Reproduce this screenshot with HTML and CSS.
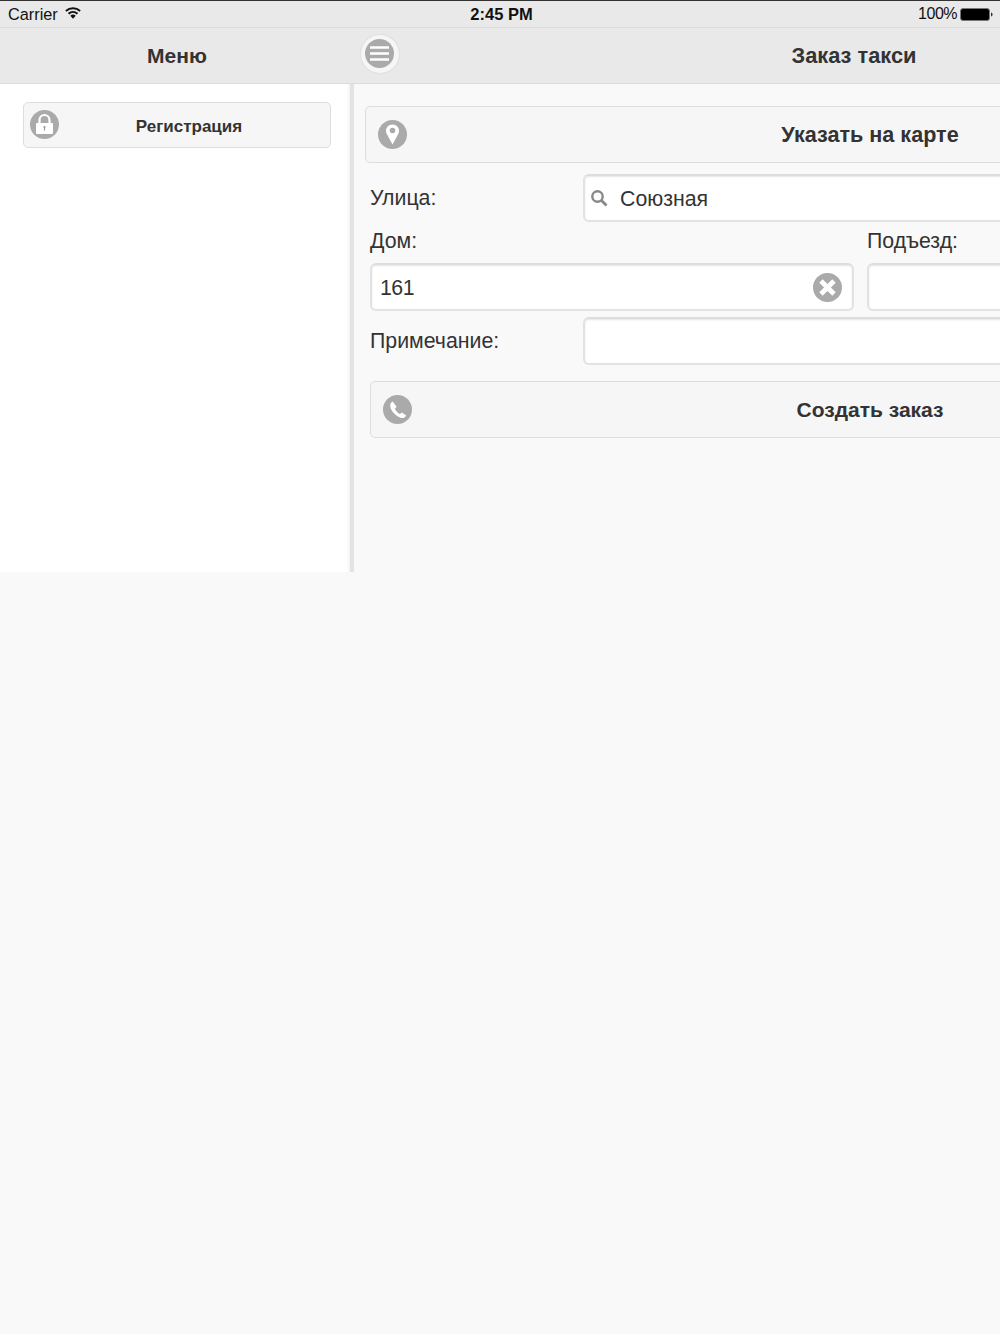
FILE: index.html
```html
<!DOCTYPE html>
<html lang="ru">
<head>
<meta charset="utf-8">
<title>Заказ такси</title>
<link rel="stylesheet" href="styles.css">
</head>
<body>
<div class="app">
  <div class="status">
    <div class="status-left">
      <span>Carrier</span>
      <svg class="wifi" width="16" height="12" viewBox="0 0 16 12"><path d="M8 11.800 5.300 8.800a4 4 0 0 1 5.400 0Z" fill="#111"/><path d="M3.500 6.700a6.800 6.800 0 0 1 9 0M.9 3.900a10.600 10.600 0 0 1 14.200 0" fill="none" stroke="#111" stroke-width="2"/></svg>
    </div>
    <div class="status-time">2:45 PM</div>
    <div class="status-right">
      <span>100%</span>
      <svg width="33" height="13" viewBox="0 0 33 13"><rect x=".5" y=".5" width="29" height="12" rx="2.500" fill="#000" stroke="#777"/><path d="M31 4.500c1 .2 1.600 1 1.600 2s-.6 1.800-1.600 2Z" fill="#333"/></svg>
    </div>
  </div>
  <div class="topbar">
    <div class="topbar-left">Меню</div>
    <div class="topbar-right">Заказ такси</div>
    <div class="menu-btn">
      <svg class="disc" viewBox="0 0 29 29"><circle cx="14.500" cy="14.500" r="14.500" fill="#aaa"/><path d="M5 8.500h19M5 14.500h19M5 20.500h19" stroke="#fff" stroke-width="2.400"/></svg>
    </div>
  </div>
  <div class="main">
    <aside class="sidebar">
      <button class="btn btn-side" type="button">
        <svg class="disc" viewBox="0 0 29 29"><circle cx="14.500" cy="14.500" r="14.500" fill="#aaa"/><path d="M9.500 13v-3a5 5 0 0 1 10 0v3" fill="none" stroke="#fff" stroke-width="2.200"/><rect x="6" y="13" width="17" height="11" rx="1" fill="#fff"/><path d="M14.500 16.500v4" stroke="#999" stroke-width="1.200"/><circle cx="14.500" cy="17" r="1.100" fill="#999"/></svg>
        <span>Регистрация</span>
      </button>
    </aside>
    <section class="content">
      <button class="btn btn-map" type="button">
        <svg class="disc" viewBox="0 0 29 29"><circle cx="14.500" cy="14.500" r="14.500" fill="#aaa"/><path fill-rule="evenodd" d="M14.500 24.500 8.800 14a6.500 6.500 0 1 1 11.400 0ZM14.500 7.700a2.800 2.800 0 1 0 0 5.600 2.800 2.800 0 0 0 0-5.600Z" fill="#fff"/></svg>
        <span>Указать на карте</span>
      </button>
      <div class="form">
        <div class="row">
          <label class="label label-wide" for="street">Улица:</label>
          <div class="field field-grow">
            <svg class="search" width="18" height="18" viewBox="0 0 18 18"><circle cx="7.500" cy="7.500" r="5.200" fill="none" stroke="#888" stroke-width="2.400"/><path d="m11.500 11.500 5 5" stroke="#888" stroke-width="2.800"/></svg>
            <input id="street" class="input input-search" type="text" value="Союзная">
          </div>
        </div>
        <div class="house">
          <div class="house-col house-main">
            <label class="label" for="house">Дом:</label>
            <div class="field">
              <input id="house" class="input input-num" type="text" value="161">
              <svg class="disc clear" viewBox="0 0 29 29"><circle cx="14.500" cy="14.500" r="14.500" fill="#aaa"/><path d="m8 8 13 13M21 8 8 21" stroke="#fff" stroke-width="4.800"/></svg>
            </div>
          </div>
          <div class="house-col house-side">
            <label class="label" for="porch">Подъезд:</label>
            <div class="field"><input id="porch" class="input" type="text"></div>
          </div>
        </div>
        <div class="row">
          <label class="label label-wide" for="note">Примечание:</label>
          <div class="field field-grow"><input id="note" class="input" type="text"></div>
        </div>
        <button class="btn btn-order" type="button">
          <svg class="disc" viewBox="0 0 29 29"><circle cx="14.500" cy="14.500" r="14.500" fill="#aaa"/><path d="M9.700 6.500c-1.700 1-2.700 2.500-2.500 4.400.4 3 2 5.500 4.200 7.800 2.300 2.200 4.500 3.800 7.400 4.300 1.900.2 3.500-.9 4.400-2.600l-4.300-3-2 1.600c-1.700-.7-4-3-5-5.300l1.700-2Z" fill="#fff"/></svg>
          <span>Создать заказ</span>
        </button>
      </div>
    </section>
  </div>
</div>
</body>
</html>
```
FILE: styles.css
```css
* { box-sizing: border-box; }
html, body { margin: 0; height: 100%; }
body {
  background: #f9f9f9;
  color: #333;
  font-family: "Liberation Sans", Arial, sans-serif;
  overflow: hidden;
}
.app { position: relative; width: 1000px; height: 1334px; overflow: hidden; }
.status {
  height: 28px;
  display: grid;
  grid-template-columns: 1fr auto 1fr;
  align-items: center;
  padding: 0 7px 0 8px;
  background: #e9e9e9;
  border-top: 1px solid #333;
  border-bottom: 1px solid #ddd;
  color: #111;
  font-size: 16.300px;
}
.status-left { display: flex; align-items: center; gap: 7px; }
.wifi { margin-top: -2px; }
.status-time { font-weight: 700; font-size: 16.500px; margin-left: 2px; }
.status-right { display: flex; justify-content: flex-end; align-items: center; gap: 3px; font-size: 16px; letter-spacing: -0.5px; }
.topbar {
  position: relative;
  display: flex;
  height: 56px;
  background: #e9e9e9;
  border-bottom: 1px solid #ddd;
  font-size: 21px;
  font-weight: 700;
  line-height: 56px;
}
.topbar-left { flex: none; width: 354px; text-align: center; }
.topbar-right { flex: none; width: 1000px; text-align: center; font-size: 21.800px; }
.menu-btn {
  position: absolute;
  left: 361px;
  top: 7px;
  width: 38px;
  height: 38px;
  padding: 4px;
  border-radius: 50%;
  background: #f6f6f6;
  box-shadow: 0 0 2px #ccc;
}
.main { display: flex; height: 488px; }
.sidebar {
  flex: none;
  width: 354px;
  padding: 18px 19px 0 23px;
  background: #fff;
  border-right: 4px solid #e3e3e3;
  box-shadow: inset -3px 0 3px -2px #eee;
}
.content { flex: none; width: 1042px; padding: 22px 0 0 11px; }
.disc { display: block; flex: none; width: 29px; height: 29px; }
.btn {
  position: relative;
  display: flex;
  align-items: center;
  justify-content: center;
  padding: 0;
  background: #f6f6f6;
  border: 1px solid #ddd;
  border-radius: 5px;
  color: #333;
  font-family: inherit;
  font-weight: 700;
  font-size: 21px;
}
.btn .disc { position: absolute; top: 50%; margin-top: -14.500px; }
.btn-side { width: 100%; height: 46px; font-size: 17px; padding: 3px 0 0 24px; }
.btn-side .disc { left: 6px; margin-top: -15.500px; }
.btn-map { width: 1010px; height: 57px; font-size: 21.600px; }
.btn-map .disc { left: 12px; }
.btn-order { width: 1000px; height: 57px; margin-top: 16px; }
.btn-order .disc { left: 12px; }
.form { width: 1000px; padding: 11px 0 0 5px; }
.row { display: flex; align-items: center; }
.label { display: block; color: #333; font-size: 21.300px; line-height: 24px; }
.label-wide { flex: none; width: 213px; }
.field { position: relative; }
.field-grow { flex: none; width: 800px; }
.input {
  display: block;
  width: 100%;
  height: 48px;
  padding: 2px 8px 0;
  background: #fff;
  border: 2px solid #e2e2e2;
  border-top-color: #ddd;
  border-radius: 6px;
  outline: 0;
  box-shadow: inset 0 1px 2px #e4e4e4;
  color: #333;
  font-family: inherit;
  font-size: 21.300px;
}
.input-search { padding-left: 35px; }
.input-num { letter-spacing: -0.5px; }
.search { position: absolute; left: 7px; top: 15px; }
.clear { position: absolute; right: 12px; top: 10px; }
.house { display: flex; gap: 13px; margin: 7px 0 6px; }
.house-col { display: flex; flex-direction: column; gap: 10px; }
.house-main { flex: none; width: 484px; }
.house-side { flex: none; width: 300px; }
```
